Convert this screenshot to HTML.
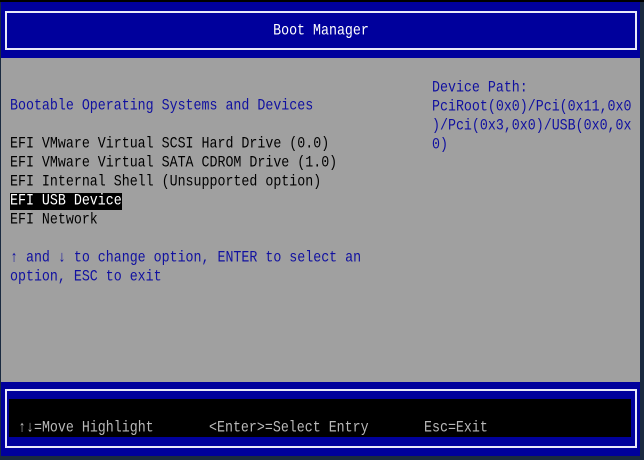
<!DOCTYPE html>
<html><head><style>
body{margin:0;width:644px;height:460px;background:#1a2a40;position:relative;overflow:hidden;font-family:"Liberation Mono","DejaVu Sans Mono",monospace;font-size:13.3px;}
div{position:absolute;white-space:pre;}
.t{line-height:19px;height:19px;transform:scaleY(1.15);transform-origin:0 50%;}
.b{color:#1010a0;}
.k{color:#000;}
</style></head><body>
<div style="left:0;top:0;width:644px;height:2px;background:#000"></div>
<div style="left:1px;top:2px;width:639px;height:56px;background:#00009c"></div>
<div style="left:5px;top:11px;width:628px;height:35px;border:2px solid #e8e8f8"></div>
<div class="t" style="top:21px;width:622px;text-align:center;color:#fff;left:10px;transform-origin:50% 50%">Boot Manager</div>
<div style="left:1px;top:58px;width:639px;height:324px;background:#a0a0a0"></div>
<div class="t b" style="left:10px;top:96px">Bootable Operating Systems and Devices</div>
<div class="t k" style="left:10px;top:134px">EFI VMware Virtual SCSI Hard Drive (0.0)</div>
<div class="t k" style="left:10px;top:153px">EFI VMware Virtual SATA CDROM Drive (1.0)</div>
<div class="t k" style="left:10px;top:172px">EFI Internal Shell (Unsupported option)</div>
<div style="left:10px;top:193px;width:112px;height:17px;background:#000"></div>
<div class="t" style="left:10px;top:191px;color:#fff">EFI USB Device</div>
<div class="t k" style="left:10px;top:210px">EFI Network</div>
<div class="t b" style="left:10px;top:248px">↑ and ↓ to change option, ENTER to select an</div>
<div class="t b" style="left:10px;top:267px">option, ESC to exit</div>
<div class="t b" style="left:432px;top:78px">Device Path:</div>
<div class="t b" style="left:432px;top:97px">PciRoot(0x0)/Pci(0x11,0x0</div>
<div class="t b" style="left:432px;top:116px">)/Pci(0x3,0x0)/USB(0x0,0x</div>
<div class="t b" style="left:432px;top:135px">0)</div>
<div style="left:1px;top:382px;width:639px;height:74px;background:#00009c"></div>
<div style="left:5px;top:389px;width:628px;height:55px;border:2px solid #e8e8f8"></div>
<div style="left:9px;top:399px;width:622px;height:38px;background:#000"></div>
<div class="t" style="left:18px;top:418px;color:#b8b8b8">↑↓=Move Highlight</div>
<div class="t" style="left:209px;top:418px;color:#b8b8b8">&lt;Enter&gt;=Select Entry</div>
<div class="t" style="left:424px;top:418px;color:#b8b8b8">Esc=Exit</div>
</body></html>
